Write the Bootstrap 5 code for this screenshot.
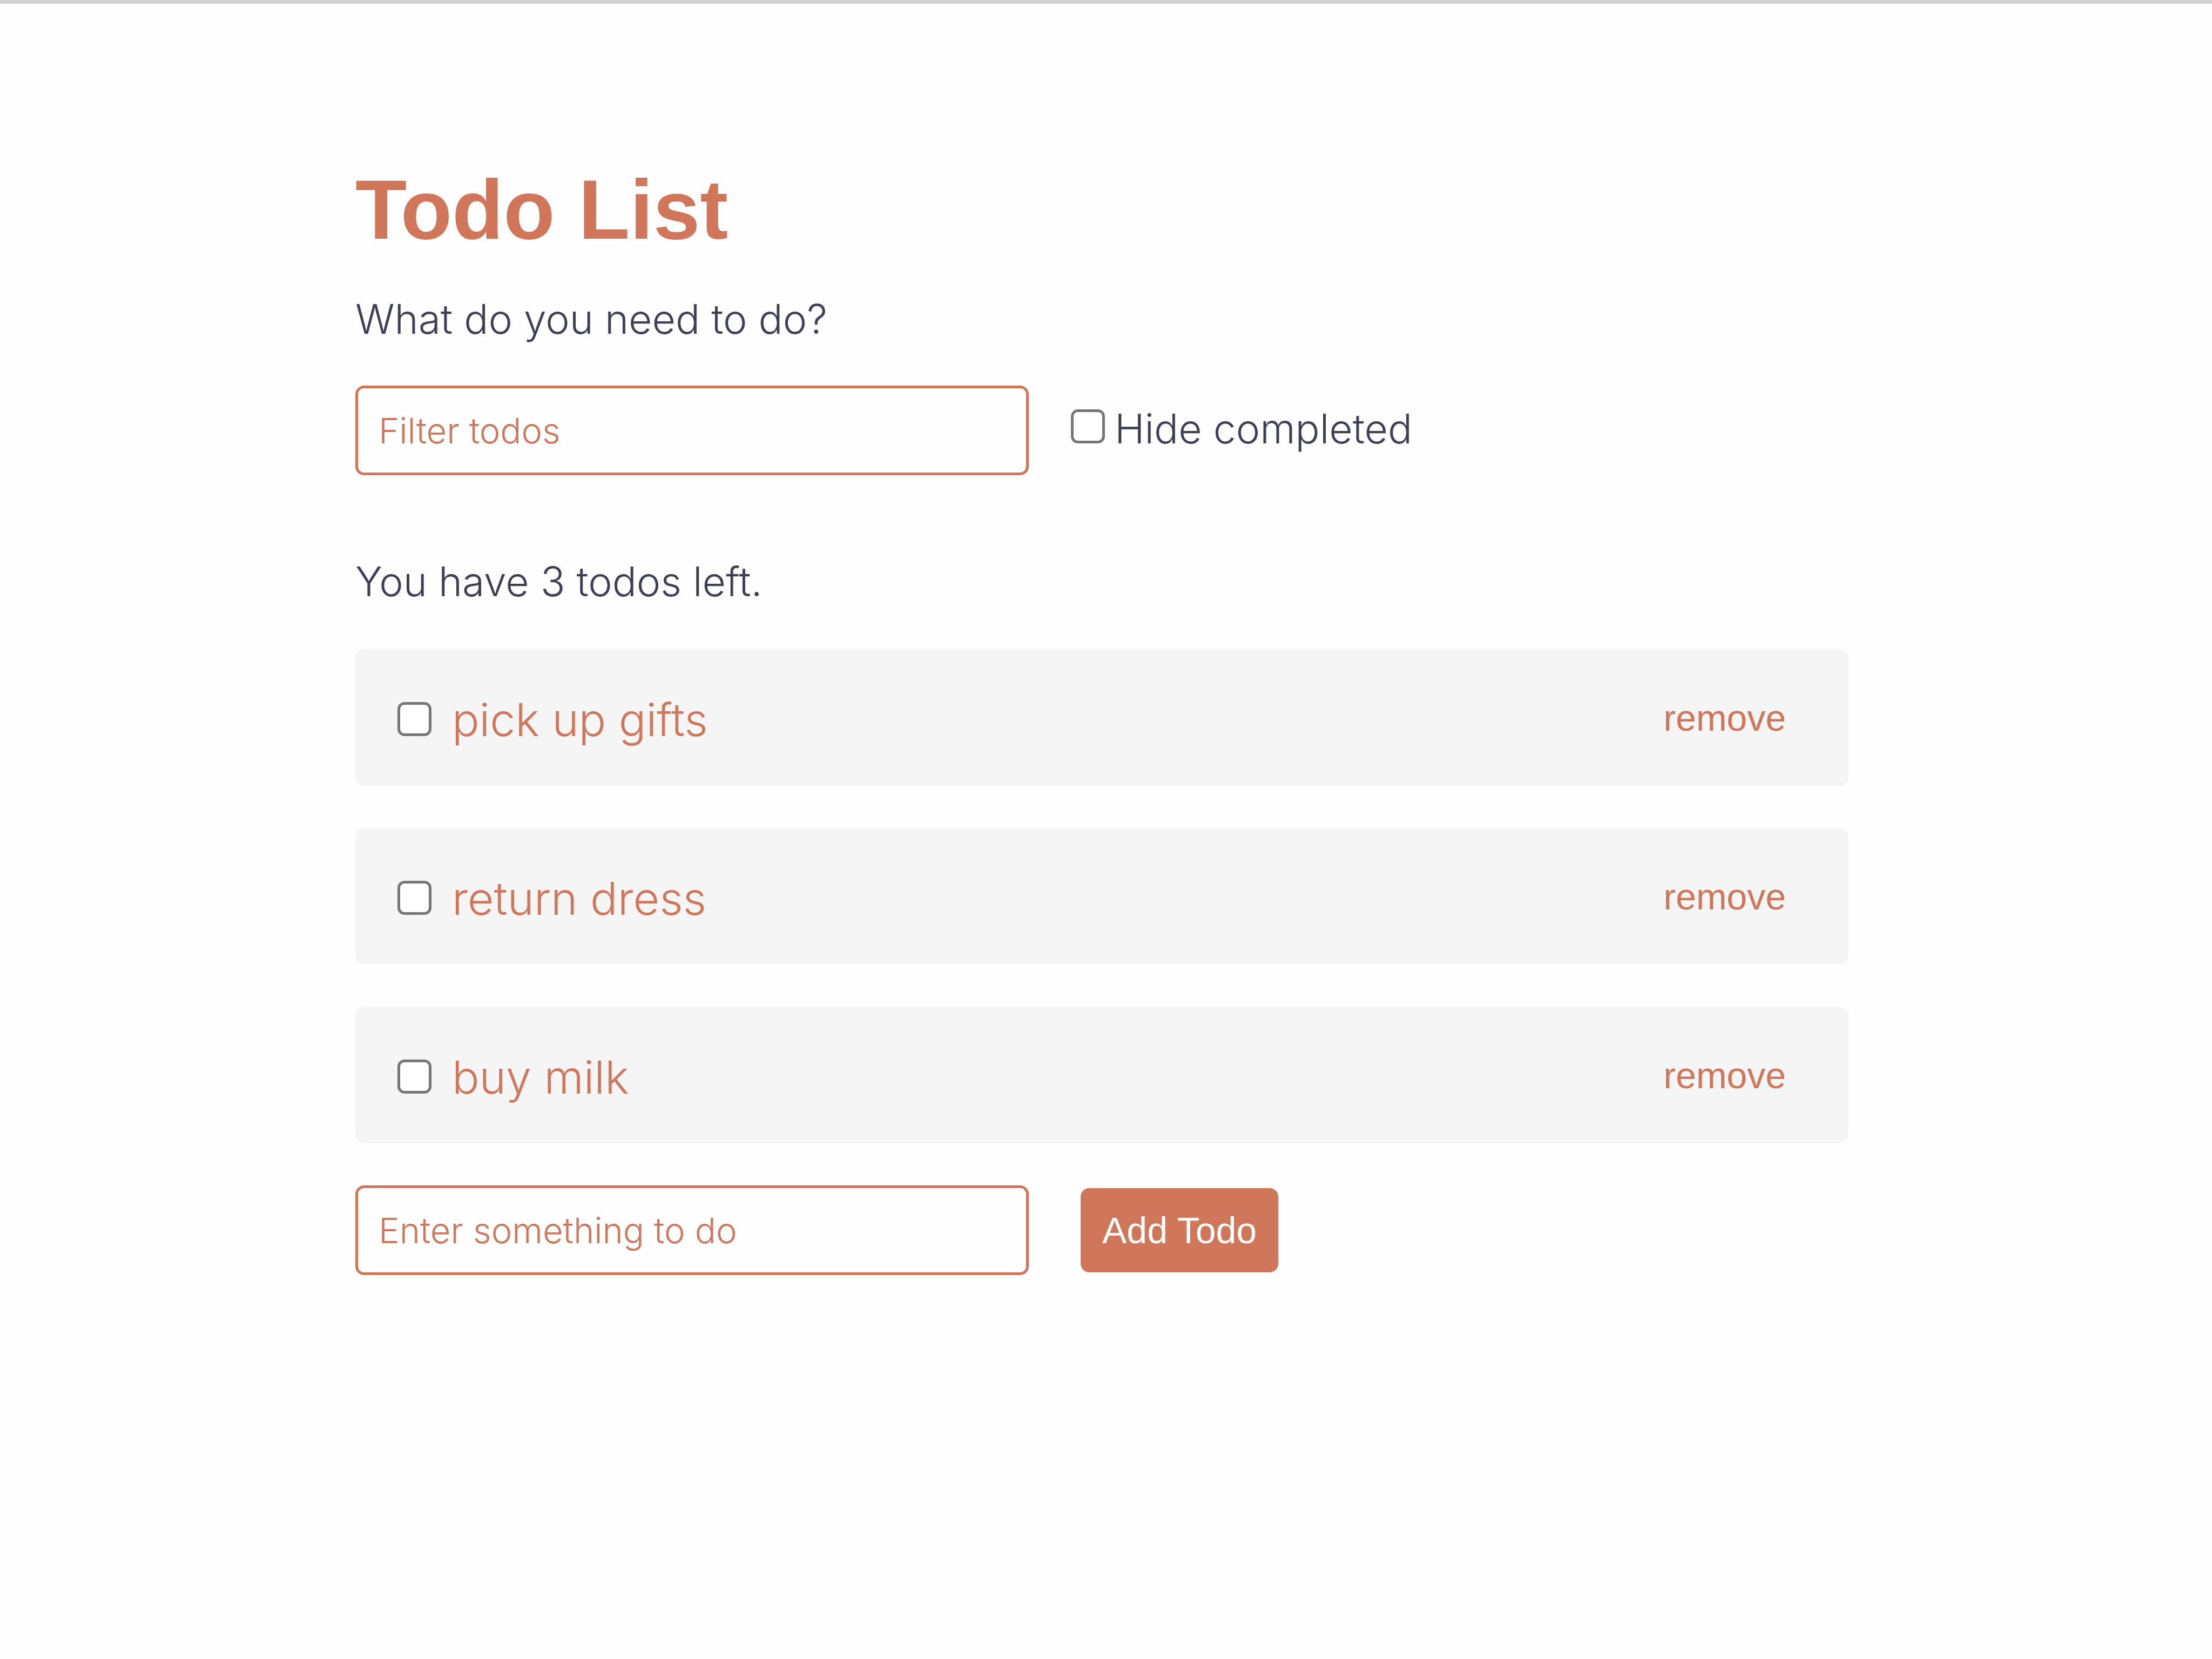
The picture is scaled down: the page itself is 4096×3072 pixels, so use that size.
<!DOCTYPE html>
<html lang="en">
<head>
<meta charset="utf-8">
<meta name="viewport" content="width=device-width, initial-scale=1">
<title>Todo List</title>
<link href="https://cdn.jsdelivr.net/npm/bootstrap@5.3.0/dist/css/bootstrap.min.css" rel="stylesheet">
<style>
:root { --clay: #cf765b; --ink: #3d4055; --edge: #767676; }
body { background: #fefefe; color: var(--ink); font-family: Inter, "Liberation Sans", sans-serif; font-weight: 350; font-size: 75px; line-height: 120px; border-top: 7px solid #d3d3d5; }
.todo-app { padding: 286px 673px 120px 658px; }
.app-title { font-family: "Liberation Sans", sans-serif; font-size: 156px; line-height: 190px; color: var(--clay); margin-bottom: 48px; }
.prompt-line { margin-bottom: 63px; }
.filter-bar { gap: 78px; margin-bottom: 137px; }
.add-bar { gap: 96px; }
.count-line { margin-bottom: 65px; }
.text-field { width: 45.1%; height: 166px; flex: none; padding: 0 38px; border: 5px solid var(--clay); border-radius: 16px; background: #fefefe; color: var(--clay); font-size: 65px; font-weight: 350; line-height: 80px; }
.text-field:focus { background: #fefefe; color: var(--clay); border-color: var(--clay); box-shadow: 0 0 0 8px #cf765b40; }
.text-field::placeholder { color: var(--clay); opacity: 1; }
.tick { width: 63px; height: 63px; flex: none; margin: 0; border: 5px solid var(--edge); background-color: #fff; }
.tick.form-check-input[type=checkbox] { border-radius: 13px; }
.tick:checked { background-color: var(--clay); border-color: var(--clay); }
.hide-toggle { gap: 18px; }
.todo-items { gap: 78px; margin-bottom: 78px; }
.todo-item { height: 253px; padding: 0 116px 0 78px; background: #f5f5f5; border-radius: 16px; color: var(--clay); }
.todo-label { gap: 38px; font-size: 84px; padding-top: 8px; }
.remove-btn, .add-btn { font-family: "Liberation Sans", sans-serif; font-size: 68px; font-weight: 400; line-height: 80px; }
.remove-btn { padding: 0; border: 0; color: var(--clay); }
.add-btn { padding: 38px 40px; border: 0; border-radius: 16px; background: var(--clay); color: #fff; }
.add-btn:hover { background: #b9644a; color: #fff; }
.remove-btn:hover { color: #b9644a; }
</style>
</head>
<body>
<main class="container-fluid todo-app">
  <h1 class="app-title fw-bold">Todo List</h1>
  <p class="prompt-line">What do you need to do?</p>
  <div class="filter-bar d-flex align-items-baseline">
    <input type="text" class="form-control text-field" placeholder="Filter todos" aria-label="Filter todos">
    <div class="hide-toggle d-flex align-items-baseline">
      <input type="checkbox" class="form-check-input tick" id="hide-completed">
      <label for="hide-completed">Hide completed</label>
    </div>
  </div>
  <p class="count-line">You have 3 todos left.</p>
  <ul class="todo-items list-unstyled d-flex flex-column">
    <li class="todo-item d-flex align-items-center justify-content-between">
      <div class="todo-label d-flex align-items-baseline">
        <input type="checkbox" class="form-check-input tick" id="todo-1">
        <label for="todo-1">pick up gifts</label>
      </div>
      <button type="button" class="btn remove-btn">remove</button>
    </li>
    <li class="todo-item d-flex align-items-center justify-content-between">
      <div class="todo-label d-flex align-items-baseline">
        <input type="checkbox" class="form-check-input tick" id="todo-2">
        <label for="todo-2">return dress</label>
      </div>
      <button type="button" class="btn remove-btn">remove</button>
    </li>
    <li class="todo-item d-flex align-items-center justify-content-between">
      <div class="todo-label d-flex align-items-baseline">
        <input type="checkbox" class="form-check-input tick" id="todo-3">
        <label for="todo-3">buy milk</label>
      </div>
      <button type="button" class="btn remove-btn">remove</button>
    </li>
  </ul>
  <form class="add-bar d-flex align-items-center">
    <input type="text" class="form-control text-field" placeholder="Enter something to do" aria-label="Enter something to do">
    <button type="button" class="btn add-btn">Add Todo</button>
  </form>
</main>
<script src="https://cdn.jsdelivr.net/npm/bootstrap@5.3.0/dist/js/bootstrap.bundle.min.js"></script>
</body>
</html>
